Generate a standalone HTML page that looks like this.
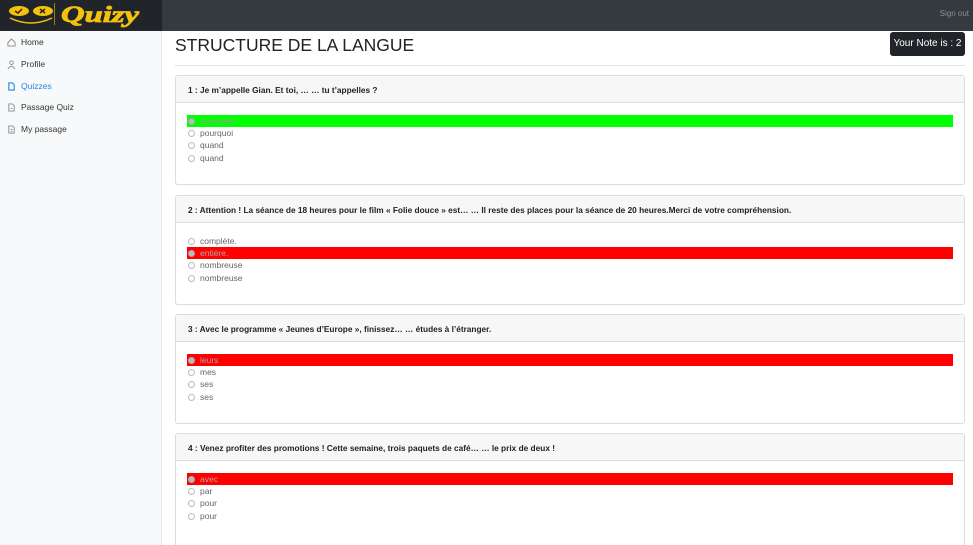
<!DOCTYPE html>
<html style="height:545px;overflow:hidden"><head><meta charset="utf-8"><style>
*{box-sizing:border-box;margin:0;padding:0}
body{width:973px;height:545px;overflow:hidden;background:#fff;font-family:"Liberation Sans",sans-serif;position:relative}
.hdr{position:absolute;left:0;top:0;width:973px;height:31px;background:#343a40}
.brand{position:absolute;left:0;top:0;width:162px;height:31px;background:#212529}
.side{position:absolute;left:0;top:31px;width:162px;height:514px;background:#f8f9fa;border-right:1px solid #e5e5e5}
.nav{position:absolute;left:7px;font-size:8.5px;color:#333;display:flex;align-items:center}
.nav svg{margin-right:5px}
.card{position:absolute;left:175px;width:790px;height:110px;border:1px solid #dcdcdc;border-radius:3px}
.ch{height:27px;background:#f7f7f7;border-bottom:1px solid #dcdcdc;font-size:8.3px;font-weight:bold;color:#222;padding:9px 0 0 12px;white-space:nowrap}
.opt{position:absolute;left:11px;width:766px;height:12px;font-size:8.5px;color:#666;display:flex;align-items:center}
.opt i{display:inline-block;width:7px;height:7px;border:1px solid #bbb;border-radius:50%;margin:0 5px 0 1px;background:#fff}
.g{background:#00ff00;color:#999}.r{background:#ff0000;color:#aaa}
.g i,.r i{background:#bbb;border-color:#aaa}
</style></head><body>
<div class="hdr"></div>
<div class="brand">
<svg width="150" height="31" viewBox="0 0 150 31">
<ellipse cx="19" cy="11" rx="10" ry="5" fill="#f4c20d"/><ellipse cx="43" cy="11" rx="10" ry="5" fill="#f4c20d"/>
<path d="M15 11l3 2 4-4" stroke="#212529" stroke-width="1.5" fill="none"/><path d="M40 9l5 4M45 9l-5 4" stroke="#212529" stroke-width="1.5"/>
<path d="M10 18q21 10 42 0" stroke="#f4c20d" stroke-width="1.5" fill="none"/>
<rect x="54" y="3" width="1" height="22" fill="#a08010"/>
<text x="61" y="22" font-family="Liberation Serif,serif" font-style="italic" font-weight="bold" font-size="23" fill="#f4c20d" textLength="78" lengthAdjust="spacingAndGlyphs" stroke="#f4c20d" stroke-width="0.8">Quizy</text>
</svg></div>
<div style="position:absolute;right:4px;top:9px;font-size:8px;color:#8a8f94">Sign out</div>
<div class="side">
<div class="nav" style="top:6px"><svg width="9" height="9" viewBox="0 0 10 10"><path d="M1 5L5 1 9 5V9H1Z" fill="none" stroke="#888"/></svg>Home</div>
<div class="nav" style="top:28px"><svg width="9" height="9" viewBox="0 0 10 10"><circle cx="5" cy="3" r="2" fill="none" stroke="#888"/><path d="M1 10q4-6 8 0" fill="none" stroke="#888"/></svg>Profile</div>
<div class="nav" style="top:50px;color:#1e88e5"><svg width="9" height="9" viewBox="0 0 10 10"><path d="M2 1H6L8 3V9H2Z" fill="none" stroke="#1e88e5" stroke-width="1.2"/></svg>Quizzes</div>
<div class="nav" style="top:71px"><svg width="9" height="9" viewBox="0 0 10 10"><path d="M2 1H6L8 3V9H2Z" fill="none" stroke="#888"/><path d="M4 6H6" stroke="#888"/></svg>Passage Quiz</div>
<div class="nav" style="top:93px"><svg width="9" height="9" viewBox="0 0 10 10"><path d="M2 1H6L8 3V9H2Z" fill="none" stroke="#888"/><path d="M4 5H6M4 7H6" stroke="#888"/></svg>My passage</div>
</div>
<div style="position:absolute;left:175px;top:35px;font-size:17.5px;color:#222">STRUCTURE DE LA LANGUE</div>
<div style="position:absolute;left:890px;top:32px;width:75px;height:24px;background:#212529;border-radius:3px;color:#fff;font-size:10px;text-align:center;line-height:24px">Your Note is : 2</div>
<div style="position:absolute;left:175px;top:65px;width:790px;height:1px;background:#e2e2e2"></div>

<div class="card" style="top:75px"><div class="ch">1 : Je m’appelle Gian. Et toi, … … tu t’appelles ?</div>
<div class="opt g" style="top:39px"><i></i>comment</div><div class="opt" style="top:51px"><i></i>pourquoi</div><div class="opt" style="top:63px"><i></i>quand</div><div class="opt" style="top:76px"><i></i>quand</div></div>

<div class="card" style="top:195px"><div class="ch">2 : Attention ! La séance de 18 heures pour le film « Folie douce » est… … Il reste des places pour la séance de 20 heures.Merci de votre compréhension.</div>
<div class="opt" style="top:39px"><i></i>complète.</div><div class="opt r" style="top:51px"><i></i>entière.</div><div class="opt" style="top:63px"><i></i>nombreuse</div><div class="opt" style="top:76px"><i></i>nombreuse</div></div>

<div class="card" style="top:314px"><div class="ch">3 : Avec le programme « Jeunes d’Europe », finissez… … études à l’étranger.</div>
<div class="opt r" style="top:39px"><i></i>leurs</div><div class="opt" style="top:51px"><i></i>mes</div><div class="opt" style="top:63px"><i></i>ses</div><div class="opt" style="top:76px"><i></i>ses</div></div>

<div class="card" style="top:433px;height:116px"><div class="ch">4 : Venez profiter des promotions ! Cette semaine, trois paquets de café… … le prix de deux !</div>
<div class="opt r" style="top:39px"><i></i>avec</div><div class="opt" style="top:51px"><i></i>par</div><div class="opt" style="top:63px"><i></i>pour</div><div class="opt" style="top:76px"><i></i>pour</div></div>
</body></html>
